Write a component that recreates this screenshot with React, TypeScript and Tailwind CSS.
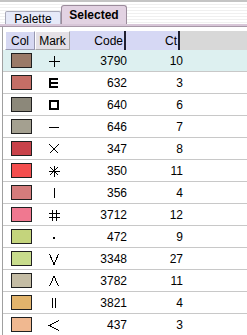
import React from "react"

type Row = { color: string; mark: string; code: string; ct: string }

const rows: Row[] = [
  { color: "#9a7a68", mark: "plus", code: "3790", ct: "10" },
  { color: "#c46e66", mark: "e", code: "632", ct: "3" },
  { color: "#8c887a", mark: "square", code: "640", ct: "6" },
  { color: "#a4a090", mark: "dash", code: "646", ct: "7" },
  { color: "#c8424a", mark: "x", code: "347", ct: "8" },
  { color: "#f44e4e", mark: "star", code: "350", ct: "11" },
  { color: "#d47c7c", mark: "bar", code: "356", ct: "4" },
  { color: "#f07890", mark: "hash", code: "3712", ct: "12" },
  { color: "#c4d47c", mark: "dot", code: "472", ct: "9" },
  { color: "#c8dc8c", mark: "v", code: "3348", ct: "27" },
  { color: "#c4bca4", mark: "lambda", code: "3782", ct: "11" },
  { color: "#e2b46c", mark: "pipes", code: "3821", ct: "4" },
  { color: "#f0b890", mark: "lt", code: "437", ct: "3" },
]

function Mark({ kind }: { kind: string }) {
  const p = { stroke: "#000", strokeWidth: 1, fill: "none" }
  let body: React.ReactNode = null
  switch (kind) {
    case "plus":
      body = (<><line x1="0.5" y1="6" x2="11.5" y2="6" {...p} /><line x1="6" y1="0.5" x2="6" y2="11.5" {...p} /></>)
      break
    case "e":
      body = (<path d="M9.5 2H2V10H9.5M2 6H9.5" stroke="#000" strokeWidth="2" fill="none" />)
      break
    case "square":
      body = (<rect x="2" y="2" width="8" height="8" stroke="#000" strokeWidth="2" fill="none" />)
      break
    case "dash":
      body = (<line x1="1" y1="6.5" x2="11" y2="6.5" {...p} />)
      break
    case "x":
      body = (<path d="M1.5 1.5L10.5 10.5M10.5 1.5L1.5 10.5" {...p} />)
      break
    case "star":
      body = (<path d="M6 0.5V11.5M0.5 6H11.5M2 2L10 10M10 2L2 10" {...p} />)
      break
    case "bar":
      body = (<line x1="6.5" y1="1" x2="6.5" y2="11" {...p} />)
      break
    case "hash":
      body = (<path d="M4.5 0.5V11.5M8.5 0.5V11.5M1 4.5H12M1 8.5H12" {...p} />)
      break
    case "dot":
      body = (<rect x="5" y="6" width="2" height="2" fill="#000" />)
      break
    case "v":
      body = (<path d="M1.5 1L6 11.5L10.5 1" {...p} />)
      break
    case "lambda":
      body = (<path d="M1.5 11.5L6 1L10.5 11.5" {...p} />)
      break
    case "pipes":
      body = (<path d="M4.5 1V11M7.5 1V11" {...p} />)
      break
    case "lt":
      body = (<path d="M11 1.5L1.5 6.5L11 11.5" {...p} />)
      break
  }
  return (
    <svg width="12" height="12" viewBox="0 0 12 12" shapeRendering="crispEdges">
      {body}
    </svg>
  )
}

function App() {
  return (
    <div className="w-[247px] h-[335px] bg-white overflow-hidden text-[12px] text-black" style={{ fontFamily: '"Liberation Sans", Arial, sans-serif' }}>
      {/* tab strip */}
      <div className="h-[24px] flex items-end pl-[5px] border-t-2 border-[#c4c4c4] bg-[repeating-linear-gradient(to_bottom,#ffffff_0px,#ffffff_2px,#f0f0f0_2px,#f0f0f0_3px)]">
        <div className="h-[13px] w-[56px] flex items-center justify-center bg-[#e6e9f8] border border-b-0 border-[#a8a8b8] rounded-t-[2px] leading-none pt-[2px]">
          Palette
        </div>
        <div className="h-[19px] w-[66px] flex items-center justify-center bg-[#e2d2e2] border border-b-0 border-[#9c8c9c] rounded-t-[3px] font-bold leading-none">
          Selected
        </div>
      </div>
      <div className="h-[3px] bg-[#d8c6d8] border-b border-[#a898a8]" />

      {/* table */}
      <div className="ml-[2px] border-l border-[#a0a0a0] h-full pt-[4px]">
        <div className="flex h-[19px] pl-[2px] leading-none">
          <div className="w-[30px] flex items-center justify-center bg-[#d6d8f2] border border-[#9898b0] border-t-white border-l-white">Col</div>
          <div className="w-[35px] flex items-center justify-center bg-[#e4e0e6] border border-[#a8a8a8] border-t-white border-l-white">Mark</div>
          <div className="w-[56px] flex items-center justify-end pr-[1px] bg-[#d6d8f4] border-r-2 border-[#202030]">Code</div>
          <div className="w-[54px] flex items-center justify-end pr-[1px] bg-[#d6d8f4] border-r-2 border-[#202030]">Ct</div>
          <div className="flex-1 bg-[#d8d8d8]" />
        </div>
        {rows.map((r, i) => (
          <div key={r.code} className={`flex items-center h-[22px] border-b border-[#c8c8c8] ${i === 0 ? "bg-[#ddf0f0]" : "bg-white"}`}>
            <div className="w-[35px] pl-[8px] flex items-center">
              <div className="w-[21px] h-[15px] border border-[#202020]" style={{ backgroundColor: r.color }} />
            </div>
            <div className="w-[32px] flex items-center justify-center">
              <Mark kind={r.mark} />
            </div>
            <div className="w-[57px] text-right">{r.code}</div>
            <div className="w-[56px] text-right">{r.ct}</div>
          </div>
        ))}
      </div>
    </div>
  )
}

export default App
